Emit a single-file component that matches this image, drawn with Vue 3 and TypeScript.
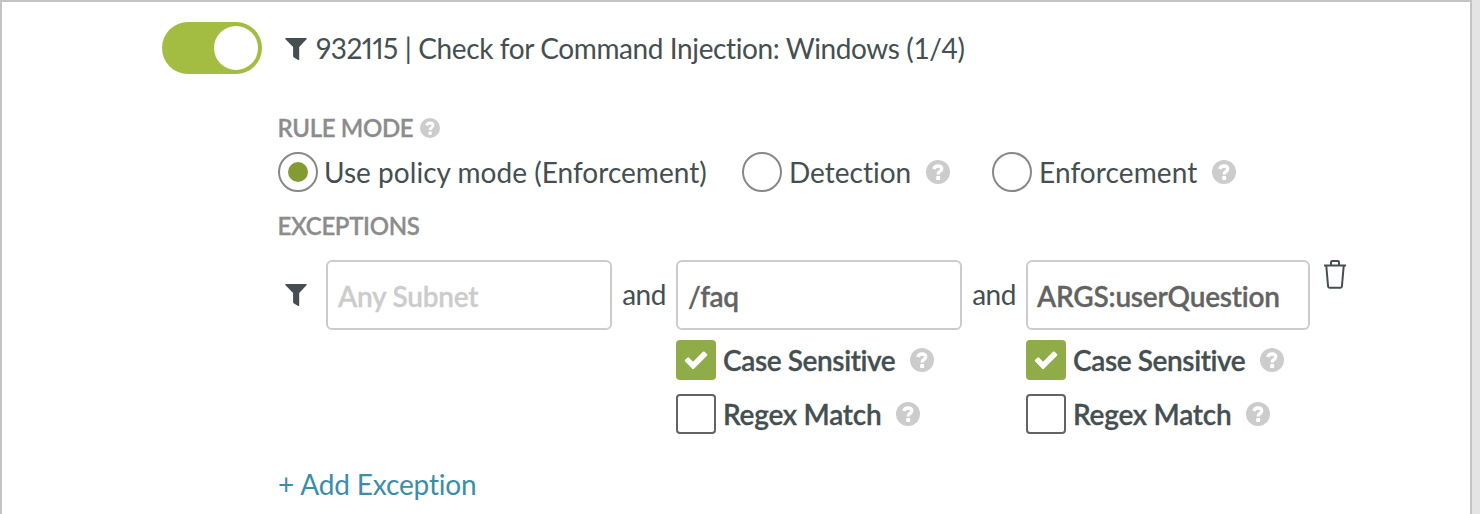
<script setup lang="ts">
const fields = [
  { value: '/faq' },
  { value: 'ARGS:userQuestion' },
]
</script>

<template>
  <div class="page">
    <svg class="defs" width="0" height="0">
      <symbol id="help" viewBox="0 0 24 24">
        <circle cx="12" cy="12" r="12" fill="#ccc" />
        <path d="M7.8 9C8.5 6.9 10 6 12 6c2.2 0 3.7 1.1 3.7 2.8 0 1.6-.9 2.1-2 2.9-1.2.8-1.5 1.1-1.5 2.7" fill="none" stroke="#fff" stroke-width="3.4" />
        <rect x="10.2" y="16.1" width="3.9" height="3.9" rx=".4" fill="#fff" />
      </symbol>
      <symbol id="filter" viewBox="0 0 22 22">
        <path d="M.9 0h20.2q1.3 0 .4 1.2L14.2 9v12.2q0 1-1 .7l-4.6-2.7q-.5-.3-.5-1V9L.5 1.2Q-.4 0 .9 0z" fill="#454f51" />
      </symbol>
    </svg>
    <main class="panel">
      <header class="head">
        <div class="toggle"><div class="knob" /></div>
        <svg class="filter"><use href="#filter" /></svg>
        <span class="title"><span class="t num">932115</span> <span class="t name">| Check for Command Injection: Windows (1/4)</span></span>
      </header>
      <section class="body">
        <div class="label"><span class="t rm">RULE MODE</span><svg class="help small"><use href="#help" /></svg></div>
        <div class="radios">
          <div class="radio r1"><i class="circle on" /><span class="t l1">Use policy mode (Enforcement)</span></div>
          <div class="radio r2"><i class="circle" /><span class="t l2">Detection</span><svg class="help"><use href="#help" /></svg></div>
          <div class="radio r3"><i class="circle" /><span class="t l3">Enforcement</span><svg class="help"><use href="#help" /></svg></div>
        </div>
        <div class="label ex"><span class="t ext">EXCEPTIONS</span></div>
        <div class="row">
          <svg class="filter"><use href="#filter" /></svg>
          <div class="input ph"><span class="t in0">Any Subnet</span></div>
          <template v-for="(f, i) in fields" :key="i">
            <span class="and"><span class="t andt">and</span></span>
            <div class="field" :class="'f' + i">
              <div class="input"><span class="t" :class="'v' + i">{{ f.value }}</span></div>
              <div class="check first"><i class="box on"><svg viewBox="0 0 24 20"><path d="M2 10l2-2q.8-.8 1.6 0L9.3 11.7 18.4 2.6q.8-.8 1.6 0l2.1 2.1q.8.8 0 1.6L10.1 18.2q-.8.8-1.6 0L2 11.6q-.8-.8 0-1.6z" /></svg></i><span class="t cs">Case Sensitive</span><svg class="help"><use href="#help" /></svg></div>
              <div class="check"><i class="box" /><span class="t rx">Regex Match</span><svg class="help"><use href="#help" /></svg></div>
            </div>
          </template>
          <svg class="trash" viewBox="0 0 24 30"><path d="M1 5.5h22M8 5V2.2Q8 1 9.2 1h5.6Q16 1 16 2.2V5M3.3 6l1.8 20.5q.1 1.2 1.3 1.2h11.2q1.2 0 1.3-1.2l1.8-20.5" /></svg>
        </div>
        <a class="add t">+ Add Exception</a>
      </section>
    </main>
  </div>
</template>

<style>
body { margin: 0; overflow: hidden; }
</style>
<style scoped>
* { box-sizing: border-box; }
.page { width: 1480px; height: 514px; background: #e4e4e4; overflow: hidden; font: 28px/40px Lato, "Liberation Sans", sans-serif; color: #454f51; font-variant-ligatures: none; }
.defs { position: absolute; }
.panel { width: 1472px; height: 514px; background: #fff; border: 2px solid #c4c4c4; border-bottom: 0; overflow: hidden; }
.head { display: flex; align-items: center; height: 52px; margin: 20px 0 0 160px; }
.toggle { width: 100px; height: 52px; border-radius: 26px; background: #a3bd42; padding: 4px; display: flex; justify-content: flex-end; }
.knob { width: 44px; height: 44px; border-radius: 50%; background: #fff; }
.filter { width: 22px; height: 22px; flex: none; }
.head .filter { margin: 2px 9px 0 23px; }
.num { font-variant-numeric: proportional-nums; letter-spacing: -0.5px; }
.name { letter-spacing: -0.39px; }
.t { white-space: nowrap; }
.body { margin-left: 276px; }
.label { display: flex; align-items: center; height: 30px; margin-top: 39px; font-size: 24px; font-weight: 600; color: #8c8c8c; -webkit-text-stroke: 0.3px; }
.rm { width: 136px; }
.l1 { letter-spacing: 0.03px; }
.l2 { width: 122px; margin-left: 1px; }
.l3 { width: 158px; margin-left: 1px; letter-spacing: 0.1px; }
.rm, .ext { letter-spacing: -0.35px; margin-left: -0.5px; }
.in0, .rx { letter-spacing: -0.25px; }
.v0, .cs { letter-spacing: -0.4px; }
.v1 { letter-spacing: -0.23px; }
.cs { width: 172px; }
.rx { width: 158px; }
.andt { letter-spacing: -0.5px; }
.help { width: 24px; height: 24px; flex: none; margin-left: 15px; }
.help.small { width: 20px; height: 20px; margin-left: 6.5px; }
.radios { display: flex; margin-top: 9px; height: 40px; }
.radio { display: flex; align-items: center; }
.r1 { width: 464px; }
.r2 { width: 250px; }
.circle { width: 40px; height: 40px; border: 2px solid #888; border-radius: 50%; margin-right: 6px; display: flex; align-items: center; justify-content: center; flex: none; }
.circle.on::after { content: ""; width: 20px; height: 20px; border-radius: 50%; background: #849a33; }
.label.ex { margin-top: 19px; }
.row { display: flex; margin-top: 19px; align-items: flex-start; }
.row .filter { margin: 24px 19px 0 7px; }
.input { width: 286px; height: 70px; border: 2px solid #ccc; border-radius: 6px; padding: 2px 0 0 10px; display: flex; align-items: center; font-weight: 600; color: #636363; flex: none; -webkit-text-stroke: 0.3px; }
.input.ph { color: #ccc; }
.and { width: 64px; height: 70px; padding-bottom: 2px; display: flex; align-items: center; justify-content: center; }
.f1 .input { width: 284px; padding-left: 9px; }
.check { display: flex; align-items: center; height: 40px; margin-top: 14px; font-weight: 600; -webkit-text-stroke: 0.3px; }
.check.first { margin-top: 10px; }
.box { width: 40px; height: 40px; border: 2px solid #636363; border-radius: 4px; margin-right: 7px; display: flex; align-items: center; justify-content: center; flex: none; }
.box.on { background: #8fac49; border: 0; }
.box svg { width: 26px; fill: #fff; stroke: none; }
.trash { width: 24px; height: 30px; margin-left: 13px; fill: none; stroke: #454f51; stroke-width: 2; }
.add { display: block; color: #3b8da9; margin-top: 30px; letter-spacing: -0.15px; }
</style>
